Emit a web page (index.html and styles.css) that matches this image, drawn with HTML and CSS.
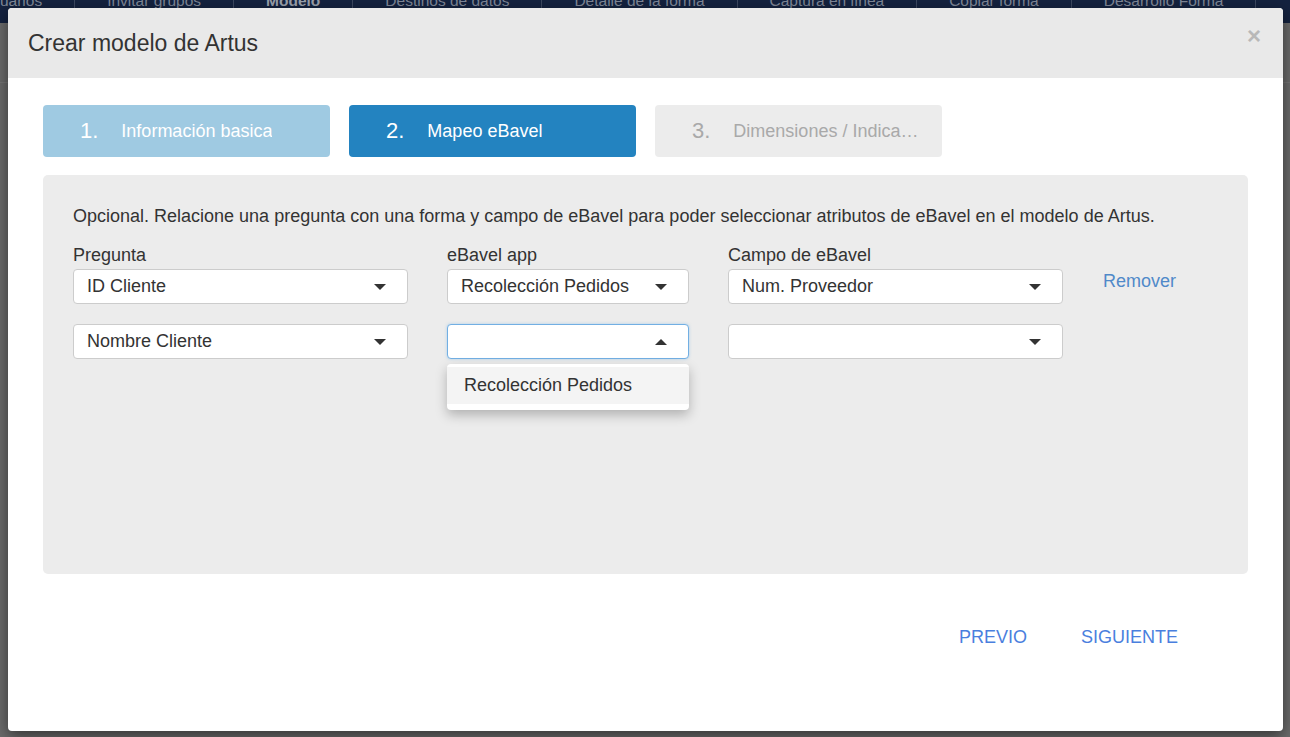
FILE: index.html
```html
<!doctype html>
<html>
  <head>
    <meta charset="UTF-8" />
    <link rel="stylesheet" href="styles.css">
  </head>
  <body>
    <nav class="top-nav">
      <div class="nav-item">Usuarios</div>
      <div class="nav-item">Invitar grupos</div>
      <div class="nav-item nav-item-active">Modelo</div>
      <div class="nav-item">Destinos de datos</div>
      <div class="nav-item">Detalle de la forma</div>
      <div class="nav-item">Captura en línea</div>
      <div class="nav-item">Copiar forma</div>
      <div class="nav-item">Desarrollo Forma</div>
    </nav>
    <div class="page-header"></div>

    <div class="modal">
      <div class="modal-header">
        <div class="modal-title">Crear modelo de Artus</div>
        <div class="modal-close">×</div>
      </div>
      <div class="modal-body">
        <div class="steps">
          <div class="step step-done">
            <span class="step-number">1.</span>
            <span class="step-label">Información basica</span>
          </div>
          <div class="step step-current">
            <span class="step-number">2.</span>
            <span class="step-label">Mapeo eBavel</span>
          </div>
          <div class="step step-next">
            <span class="step-number">3.</span>
            <span class="step-label">Dimensiones / Indicadores</span>
          </div>
        </div>

        <div class="panel">
          <div class="panel-note">Opcional. Relacione una pregunta con una forma y campo de eBavel para poder seleccionar atributos de eBavel en el modelo de Artus.</div>

          <div class="mapping-row">
            <div class="field field-wide">
              <div class="field-label">Pregunta</div>
              <div class="select">
                <span class="select-value">ID Cliente</span>
                <span class="caret"></span>
              </div>
            </div>
            <div class="field field-narrow">
              <div class="field-label">eBavel app</div>
              <div class="select">
                <span class="select-value">Recolección Pedidos</span>
                <span class="caret"></span>
              </div>
            </div>
            <div class="field field-wide">
              <div class="field-label">Campo de eBavel</div>
              <div class="select">
                <span class="select-value">Num. Proveedor</span>
                <span class="caret"></span>
              </div>
            </div>
            <div class="remove-link">Remover</div>
          </div>

          <div class="mapping-row mapping-row-next">
            <div class="field field-wide">
              <div class="select">
                <span class="select-value">Nombre Cliente</span>
                <span class="caret"></span>
              </div>
            </div>
            <div class="field field-narrow">
              <div class="select select-open">
                <span class="select-value"></span>
                <span class="caret caret-up"></span>
                <div class="select-menu">
                  <div class="select-option">Recolección Pedidos</div>
                </div>
              </div>
            </div>
            <div class="field field-wide">
              <div class="select">
                <span class="select-value"></span>
                <span class="caret"></span>
              </div>
            </div>
          </div>
        </div>

        <div class="modal-footer">
          <div class="footer-btn">Previo</div>
          <div class="footer-btn">Siguiente</div>
        </div>
      </div>
    </div>
  </body>
</html>
```

FILE: styles.css
```css
html,
body {
  height: 100%;
}
body {
  background: #6b6b6b;
  color: #333;
  font-family: "Liberation Sans", Arial, sans-serif;
  margin: 0;
  overflow: hidden;
  position: relative;
}
.top-nav {
  background: #14223f;
  display: flex;
  height: 23px;
  margin-left: -51px;
  overflow: hidden;
}
.nav-item {
  border-right: 1px solid #3c4860;
  color: #7f8797;
  flex-shrink: 0;
  font-size: 15.5px;
  height: 30px;
  line-height: 14px;
  margin-top: -6px;
  padding: 0 32px;
  white-space: nowrap;
}
.nav-item-active {
  color: #9aa0ab;
  font-weight: bold;
}
.page-header {
  border-bottom: 1px solid #767676;
  height: 59px;
}
.modal {
  background: white;
  border-radius: 4px;
  box-shadow: 0 5px 15px rgba(0, 0, 0, 0.5);
  display: flex;
  flex-direction: column;
  height: 723px;
  left: 8px;
  overflow: hidden;
  position: absolute;
  top: 8px;
  width: 1275px;
}
.modal-header {
  align-items: center;
  background: #e9e9e9;
  display: flex;
  flex-shrink: 0;
  height: 70px;
  justify-content: space-between;
  padding: 0 22px 0 20px;
}
.modal-title {
  font-size: 23px;
}
.modal-close {
  align-self: flex-start;
  color: #b8b8b8;
  font-size: 24px;
  font-weight: bold;
  line-height: 24px;
  margin-top: 16px;
}
.modal-body {
  padding: 27px 35px 0;
}
.steps {
  display: flex;
  gap: 19px;
}
.step {
  align-items: center;
  border-radius: 4px;
  box-sizing: border-box;
  color: white;
  display: flex;
  height: 52px;
  padding: 0 22px 0 37px;
  width: 287px;
}
.step-done {
  background: #9fcae2;
}
.step-current {
  background: #2383c0;
}
.step-next {
  background: #ececec;
  color: #a9a9a9;
}
.step-number {
  flex-shrink: 0;
  font-size: 22px;
  margin-right: 23px;
}
.step-label {
  font-size: 18px;
  overflow: hidden;
  text-overflow: ellipsis;
  white-space: nowrap;
}
.panel {
  background: #ececec;
  border-radius: 5px;
  box-sizing: border-box;
  height: 399px;
  margin-top: 18px;
  padding: 30px 30px;
}
.panel-note,
.field-label,
.remove-link {
  font-size: 18px;
  line-height: 22px;
}
.panel-note {
  margin-bottom: 17px;
}
.mapping-row {
  align-items: flex-end;
  display: flex;
  gap: 39px;
}
.mapping-row-next {
  margin-top: 20px;
}
.field-wide {
  width: 335px;
}
.field-narrow {
  width: 242px;
}
.field-label {
  margin-bottom: 3px;
}
.remove-link {
  color: #5089c9;
  margin-left: 1px;
  padding-bottom: 12px;
}
.select {
  align-items: center;
  background: white;
  border: 1px solid #cccccc;
  border-radius: 4px;
  box-sizing: border-box;
  display: flex;
  font-size: 18px;
  height: 35px;
  justify-content: space-between;
  padding: 0 21px 0 13px;
  position: relative;
}
.select-open {
  border-color: #72afe3;
  box-shadow: 0 0 3px rgba(102, 175, 233, 0.5);
}
.caret {
  border-left: 6px solid transparent;
  border-right: 6px solid transparent;
  border-top: 6px solid #333;
  height: 0;
  width: 0;
}
.caret-up {
  border-bottom: 6px solid #333;
  border-top: none;
}
.select-menu {
  background: white;
  border-radius: 4px;
  box-shadow: 0 5px 12px rgba(0, 0, 0, 0.25);
  left: -1px;
  padding: 3px 0 6px;
  position: absolute;
  right: -1px;
  top: 39px;
  z-index: 2;
}
.select-option {
  background: #f4f4f4;
  height: 37px;
  line-height: 37px;
  padding: 0 17px;
}
.modal-footer {
  display: flex;
  justify-content: flex-end;
  margin-top: 44px;
  padding-right: 43px;
}
.footer-btn {
  color: #4a7fde;
  font-size: 18px;
  line-height: 22px;
  padding: 8px 27px;
  text-transform: uppercase;
}
```
